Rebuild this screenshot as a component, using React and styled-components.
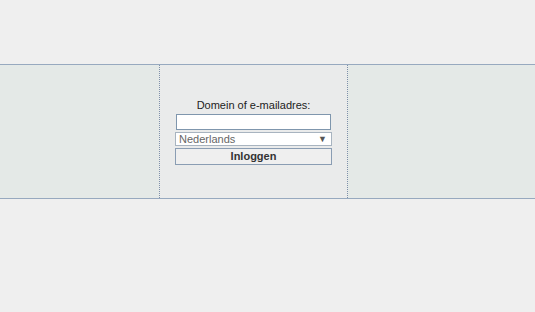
import React from "react";
import styled, { createGlobalStyle } from "styled-components";

const Global = createGlobalStyle`
  html, body { margin: 0; padding: 0; background: #efefef; }
  body { font-family: "Liberation Sans", Arial, sans-serif; font-size: 11px; color: #222; }
`;

const Band = styled.div`
  margin-top: 64px;
  height: 133px;
  border-top: 1px solid #97a9bf;
  border-bottom: 1px solid #97a9bf;
  background: #e4e9e7;
  display: grid;
  grid-template-columns: 159px 189px 1fr;
`;

const Side = styled.div``;

const Center = styled.div`
  border-left: 1px dotted #7d90a8;
  border-right: 1px dotted #7d90a8;
  background: #eaebeb;
  display: flex;
  align-items: center;
  justify-content: center;
`;

const Form = styled.form`
  width: 157px;
  display: flex;
  flex-direction: column;
  align-items: center;
`;

const Label = styled.label`
  font-size: 11px;
  line-height: 13px;
  color: #222;
  margin-bottom: 2px;
`;

const Input = styled.input`
  box-sizing: border-box;
  width: 155px;
  height: 16px;
  border: 1px solid #7f96ad;
  background: #fff;
  padding: 0 2px;
  margin: 0 0 2px;
  font: inherit;
  outline: none;
`;

const SelectBox = styled.div`
  box-sizing: border-box;
  width: 157px;
  height: 14px;
  border: 1px solid #a8b4c0;
  background: #fff;
  display: flex;
  align-items: center;
  justify-content: space-between;
  padding: 0 4px 0 3px;
  color: #666;
  font-size: 11px;
  line-height: 12px;
  margin-bottom: 2px;
`;

const Arrow = styled.span`
  font-size: 9px;
  color: #555;
`;

const Button = styled.button`
  box-sizing: border-box;
  width: 157px;
  height: 17px;
  border: 1px solid #8a9db3;
  background: #efefef;
  font-family: inherit;
  font-size: 11px;
  font-weight: bold;
  color: #333;
  padding: 0;
  line-height: 14px;
`;

export default function App() {
  return (
    <>
      <Global />
      <Band>
        <Side />
        <Center>
          <Form onSubmit={(e) => e.preventDefault()}>
            <Label>Domein of e-mailadres:</Label>
            <Input type="text" />
            <SelectBox>
              <span>Nederlands</span>
              <Arrow>▼</Arrow>
            </SelectBox>
            <Button type="submit">Inloggen</Button>
          </Form>
        </Center>
        <Side />
      </Band>
    </>
  );
}
